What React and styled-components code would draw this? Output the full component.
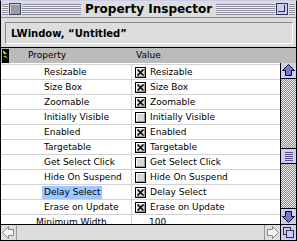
import React from 'react';
import styled, { createGlobalStyle } from 'styled-components';

const GlobalStyle = createGlobalStyle`
  html, body {
    margin: 0;
    padding: 0;
    background: #fff;
  }
  * {
    box-sizing: border-box;
  }
`;

const rows = [
  { name: 'Resizable', checked: true },
  { name: 'Size Box', checked: true },
  { name: 'Zoomable', checked: true },
  { name: 'Initially Visible', checked: false },
  { name: 'Enabled', checked: true },
  { name: 'Targetable', checked: true },
  { name: 'Get Select Click', checked: false },
  { name: 'Hide On Suspend', checked: false },
  { name: 'Delay Select', checked: true, selected: true },
  { name: 'Erase on Update', checked: true },
  { name: 'Minimum Width', value: '100', top: true },
];

const CheckBox = ({ checked }) => (
  <svg width="11" height="11" viewBox="0 0 11 11">
    <rect x="0.5" y="0.5" width="10" height="10" fill="#d8d8d8" stroke="#000" />
    <path d="M1.5 9.5V1.5H9.5" fill="none" stroke="#fff" />
    <path d="M9.5 1.5V9.5H1.5" fill="none" stroke="#999" />
    {checked && (
      <path d="M2.5 2.5L8.5 8.5M8.5 2.5L2.5 8.5" stroke="#000" strokeWidth="1.6" />
    )}
  </svg>
);

const Arrow = ({ dir, active }) => {
  const rot = { up: 0, right: 90, down: 180, left: 270 }[dir];
  return (
    <svg width="15" height="15" viewBox="0 0 15 15">
      <path
        d="M7.5 1.5L13.5 7.5H10.5V12.5H4.5V7.5H1.5Z"
        transform={`rotate(${rot} 7.5 7.5)`}
        fill={active ? '#7a7acc' : '#f4f4f4'}
        stroke={active ? '#000' : '#888'}
        strokeLinejoin="miter"
      />
    </svg>
  );
};

const App = () => {
  return (
    <>
      <GlobalStyle />
      <Window>
        <TitleBar>
          <Stripes>
            <CloseBox />
          </Stripes>
          <Title>Property Inspector</Title>
          <Stripes $end>
            <ZoomBox />
          </Stripes>
        </TitleBar>

        <InfoBar>
          <Field>LWindow, “Untitled”</Field>
        </InfoBar>

        <HeaderRow>
          <HeaderIcon>
            <svg width="7" height="14" viewBox="0 0 7 14">
              <rect width="7" height="14" fill="#000" />
              <path d="M1 1L5 5L2 5L6 10L1 7L3 7L1 3Z" fill="#ffd800" />
            </svg>
          </HeaderIcon>
          <PropLabel>Property</PropLabel>
          <HeaderLabel>Value</HeaderLabel>
        </HeaderRow>

        <Body>
          <List>
            {rows.map((r) => (
              <Row key={r.name}>
                <NameCell $indent={r.top ? 35 : 43}>
                  <Name $selected={r.selected}>{r.name}</Name>
                </NameCell>
                <ValueCell>
                  {r.value !== undefined ? (
                    <PlainValue>{r.value}</PlainValue>
                  ) : (
                    <>
                      <CheckBox checked={r.checked} />
                      <span>{r.name}</span>
                    </>
                  )}
                </ValueCell>
              </Row>
            ))}
          </List>
          <VScroll>
            <ArrowBox $bottom>
              <Arrow dir="up" active />
            </ArrowBox>
            <Track>
              <Thumb style={{ marginTop: 69 }}>
                <Grip />
              </Thumb>
            </Track>
            <ArrowBox $top>
              <Arrow dir="down" active />
            </ArrowBox>
          </VScroll>
        </Body>

        <HScroll>
          <HArrowBox $right>
            <Arrow dir="left" />
          </HArrowBox>
          <HTrack />
          <HArrowBox $left>
            <Arrow dir="right" />
          </HArrowBox>
          <GrowBox>
            <svg width="15" height="15" viewBox="0 0 15 15">
              <rect x="2.5" y="2.5" width="7" height="7" fill="#ccccff" stroke="#333" />
              <rect x="5.5" y="5.5" width="7" height="7" fill="#ccccff" stroke="#333" />
            </svg>
          </GrowBox>
        </HScroll>
      </Window>
    </>
  );
};

export default App;

const Window = styled.div`
  width: 297px;
  height: 241px;
  display: flex;
  flex-direction: column;
  border: 1px solid #000;
  border-top-color: #ccccee;
  background: #fff;
  overflow: hidden;
  font-family: 'DejaVu Sans', Verdana, sans-serif;
  font-size: 9px;
  color: #000;
`;

const TitleBar = styled.div`
  height: 17px;
  flex: none;
  display: flex;
  align-items: center;
  padding: 0 1px;
  background: #dddddd;
  border-bottom: 1px solid #8888aa;
`;

const Stripes = styled.div`
  flex: 1;
  height: 11px;
  display: flex;
  align-items: center;
  justify-content: ${(p) => (p.$end ? 'flex-end' : 'flex-start')};
  padding: 0 7px;
  background: repeating-linear-gradient(
    to bottom,
    #8c8c9c 0 1px,
    #f2f2f2 1px 2px
  );
`;

const WinBox = styled.div`
  width: 12px;
  height: 12px;
  border: 1px solid #333355;
  box-shadow: 0 0 0 1px #dddddd;
  position: relative;
`;

const CloseBox = styled(WinBox)`
  background: #9a9aa8;
  border-color: #444466;
  box-shadow: 0 0 0 1px #dddddd, inset 1px 1px 0 #ccccdd;
`;

const ZoomBox = styled(WinBox)`
  background: #ccccee;

  &::after {
    content: '';
    position: absolute;
    left: 1px;
    top: 1px;
    width: 6px;
    height: 6px;
    border-right: 1px solid #333355;
    border-bottom: 1px solid #333355;
  }
`;

const Title = styled.div`
  padding: 0 4px;
  font-weight: bold;
  font-size: 12px;
  line-height: 16px;
  white-space: nowrap;
`;

const InfoBar = styled.div`
  height: 29px;
  flex: none;
  padding: 4px 3px 3px 4px;
  background: #dddddd;
`;

const Field = styled.div`
  height: 22px;
  display: flex;
  align-items: center;
  padding-left: 5px;
  border: 1px solid;
  border-color: #888 #fff #fff #888;
  background: #dddddd;
  font-weight: bold;
  font-size: 10px;
`;

const HeaderRow = styled.div`
  height: 16px;
  flex: none;
  display: flex;
  align-items: center;
  background: #bbbbbb;
  border-top: 1px solid #000;
`;

const HeaderIcon = styled.div`
  display: flex;
  margin-left: 1px;
`;

const HeaderLabel = styled.div`
  line-height: 15px;
`;

const PropLabel = styled(HeaderLabel)`
  width: 127px;
  padding-left: 19px;
`;

const Body = styled.div`
  flex: 1;
  min-height: 0;
  display: flex;
`;

const List = styled.div`
  flex: 1;
  overflow: hidden;
  padding-top: 1px;
`;

const Row = styled.div`
  height: 15px;
  display: grid;
  grid-template-columns: 131px 1fr;
  border-top: 1px solid #d2d2d2;
`;

const NameCell = styled.div`
  display: flex;
  align-items: center;
  padding-left: ${(p) => p.$indent}px;
  border-right: 1px solid #d2d2d2;
  white-space: nowrap;
`;

const Name = styled.span`
  line-height: 13px;
  padding: 0 2px;
  margin-left: -2px;
  background: ${(p) => (p.$selected ? '#9cc8ff' : 'transparent')};
`;

const ValueCell = styled.div`
  display: flex;
  align-items: center;
  gap: 4px;
  padding-left: 3px;
  white-space: nowrap;

  svg {
    flex: none;
  }
`;

const PlainValue = styled.span`
  padding-left: 14px;
`;

const VScroll = styled.div`
  width: 16px;
  flex: none;
  display: flex;
  flex-direction: column;
  border-left: 1px solid #000;
`;

const ArrowBox = styled.div`
  height: 16px;
  flex: none;
  display: flex;
  align-items: center;
  justify-content: center;
  background: #ccccff;
  border-bottom: ${(p) => (p.$bottom ? '1px solid #000' : 'none')};
  border-top: ${(p) => (p.$top ? '1px solid #000' : 'none')};
`;

const Track = styled.div`
  flex: 1;
  display: flex;
  flex-direction: column;
  background: repeating-conic-gradient(#8a8a8a 0 25%, #ececec 0 50%) 0 0 / 2px 2px;
`;

const Thumb = styled.div`
  height: 16px;
  display: flex;
  align-items: center;
  justify-content: center;
  background: #ccccff;
  border-top: 1px solid #000;
  border-bottom: 1px solid #000;
`;

const Grip = styled.div`
  width: 8px;
  height: 9px;
  background: repeating-linear-gradient(to bottom, #555588 0 1px, transparent 1px 2px);
`;

const HScroll = styled.div`
  height: 16px;
  flex: none;
  display: flex;
  border-top: 1px solid #000;
  background: #dddddd;
`;

const HArrowBox = styled.div`
  width: 16px;
  flex: none;
  display: flex;
  align-items: center;
  justify-content: center;
  border-right: ${(p) => (p.$right ? '1px solid #999' : 'none')};
  border-left: ${(p) => (p.$left ? '1px solid #999' : 'none')};
`;

const HTrack = styled.div`
  flex: 1;
`;

const GrowBox = styled.div`
  width: 16px;
  flex: none;
  display: flex;
  align-items: center;
  justify-content: center;
  background: #ccccff;
  border-left: 1px solid #000;
`;
